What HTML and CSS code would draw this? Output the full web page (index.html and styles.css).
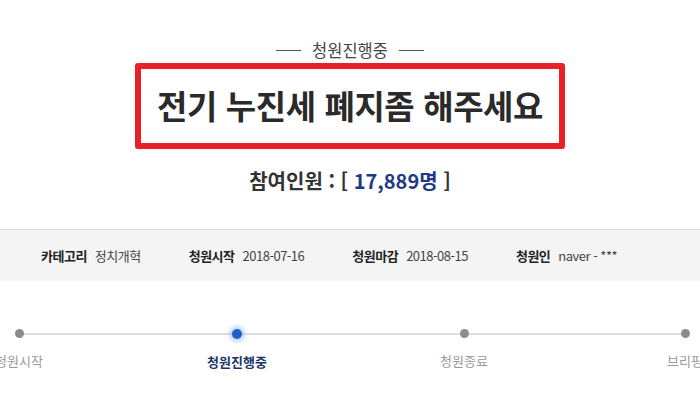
FILE: index.html
```html
<!DOCTYPE html>
<html lang="ko">
<head>
<meta charset="utf-8">
<link rel="stylesheet" href="styles.css">
</head>
<body>
<div class="page">
  <div class="status"><span class="dash"></span><span class="status-text">청원진행중</span><span class="dash"></span></div>
  <div class="title-wrap">
    <h1 class="title">전기 누진세 폐지좀 해주세요</h1>
  </div>
  <div class="count">참여인원 : [ <span class="num">17,889명</span> ]</div>
  <ul class="info">
    <li><b>카테고리</b><span>정치개혁</span></li>
    <li><b>청원시작</b><span>2018-07-16</span></li>
    <li><b>청원마감</b><span>2018-08-15</span></li>
    <li><b>청원인</b><span>naver - ***</span></li>
  </ul>
  <div class="progress">
    <div class="track"></div>
    <div class="step"><i class="dot"></i><span class="label">청원시작</span></div>
    <div class="step active"><i class="dot"></i><span class="label">청원진행중</span></div>
    <div class="step"><i class="dot"></i><span class="label">청원종료</span></div>
    <div class="step"><i class="dot"></i><span class="label">브리핑</span></div>
  </div>
</div>
</body>
</html>
```
FILE: styles.css
```css
html, body {
  margin: 0;
  padding: 0;
  background: #fff;
  overflow: hidden;
}
body {
  font-family: "Noto Sans CJK KR", "Noto Sans", sans-serif;
  color: #222;
  width: 700px;
  height: 400px;
}
.page {
  padding-top: 39px;
}
.status {
  display: flex;
  justify-content: center;
  align-items: center;
  gap: 11px;
  height: 22px;
  font-size: 16.5px;
  color: #444;
}
.dash {
  width: 25px;
  height: 1px;
  background: #555;
}
.status-text {
  line-height: 22px;
}
.title-wrap {
  display: flex;
  justify-content: center;
  margin-top: 2px;
}
.title {
  margin: 0;
  width: 430px;
  height: 86px;
  box-sizing: border-box;
  border: 6px solid #e8202a;
  border-radius: 3px;
  display: flex;
  align-items: center;
  justify-content: center;
  font-size: 33px;
  font-weight: 700;
  letter-spacing: -0.4px;
  color: #2a2a2a;
  padding-bottom: 2px;
}
.count {
  margin-top: 18px;
  text-align: center;
  font-size: 20px;
  font-weight: 700;
  color: #333;
  line-height: 28px;
}
.count .num {
  color: #1f3a85;
}
.info {
  list-style: none;
  margin: 34px 0 0;
  padding: 0 0 0 41px;
  height: 52px;
  box-sizing: border-box;
  border-top: 1px solid #d9d9d9;
  background: #f4f4f4;
  display: flex;
  align-items: center;
  gap: 48px;
  font-size: 13px;
  letter-spacing: -0.5px;
  color: #444;
}
.info li {
  display: flex;
  align-items: center;
  gap: 8px;
  white-space: nowrap;
}
.info b {
  font-weight: 700;
  color: #222;
}
.progress {
  position: relative;
  display: grid;
  grid-template-columns: 200px 236px 218px 224px;
  margin-left: -81px;
  margin-top: 47px;
}
.track {
  position: absolute;
  left: 100px;
  width: 666px;
  top: 5px;
  height: 2px;
  background: #dedede;
}
.step {
  display: flex;
  flex-direction: column;
  align-items: center;
  position: relative;
}
.dot {
  display: block;
  width: 9px;
  height: 9px;
  margin-top: 1px;
  border-radius: 50%;
  background: #8c8c8c;
}
.step.active .dot {
  width: 10px;
  height: 10px;
  margin-top: 1px;
  background: #2160c8;
  box-shadow: 0 0 4px 3px rgba(80, 140, 240, 0.35);
}
.label {
  margin-top: 13px;
  font-size: 13px;
  color: #999;
  white-space: nowrap;
}
.step.active .label {
  font-weight: 700;
  color: #1e3468;
}
```
